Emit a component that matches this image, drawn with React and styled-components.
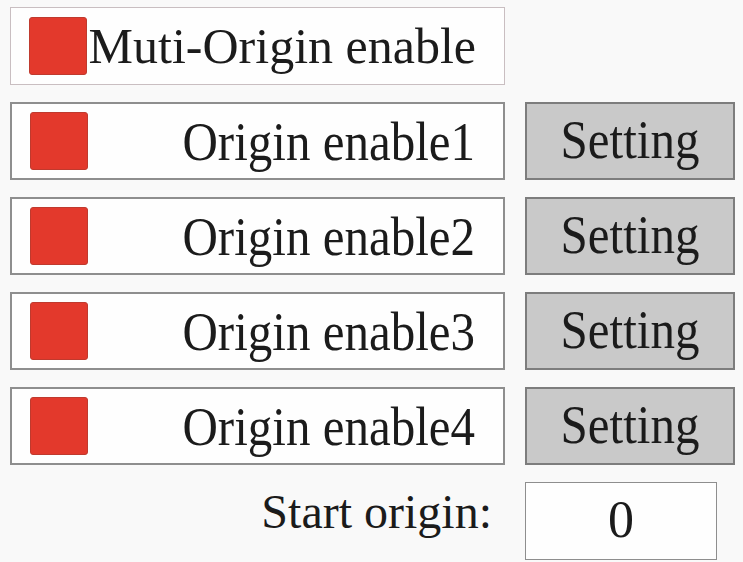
import React from 'react';
import styled, { createGlobalStyle } from 'styled-components';

const GlobalStyle = createGlobalStyle`
  html, body {
    margin: 0;
    padding: 0;
    background: #f9f9f9;
  }
  body {
    font-family: "Liberation Serif", "Times New Roman", serif;
    color: #1b1b1b;
  }
`;

const StyledPanel = styled.div`
  display: grid;
  grid-template-columns: 495px 210px;
  grid-auto-rows: 78px;
  column-gap: 20px;
  row-gap: 17px;
  padding: 7px 0 0 10px;
`;

const StyledOption = styled.div`
  display: flex;
  align-items: center;
  box-sizing: border-box;
  height: 100%;
  padding: 0 28px 0 18px;
  background: #fefefe;
  border: ${props => props.light ? '1.5px solid #c9bec1' : '2px solid #8e8e8e'};
  font-size: ${props => props.light ? '50px' : '49px'};
  line-height: 1;
`;

const StyledCheck = styled.span`
  flex: 0 0 auto;
  width: 58px;
  height: 58px;
  box-sizing: border-box;
  background: #e3392c;
  border: 1px solid #bf3a2e;
  border-radius: 3px;
`;

const StyledLabel = styled.span`
  flex: 1;
  text-align: right;
  white-space: nowrap;
  transform: ${props => props.tall ? 'scaleY(1.1)' : 'none'};
  transform-origin: center;
`;

const StyledButton = styled.button`
  box-sizing: border-box;
  height: 100%;
  width: 100%;
  margin: 0;
  padding: 0 0 4px 0;
  background: #c9c9c9;
  border: 2px solid #7d7d7d;
  font-family: "Liberation Serif", "Times New Roman", serif;
  font-size: 49px;
  line-height: 1;
  color: #1b1b1b;
  cursor: pointer;
`;

const StyledButtonText = styled.span`
  display: inline-block;
  transform: scaleY(1.1);
`;

const StyledStartLabel = styled.div`
  display: flex;
  align-items: center;
  justify-content: flex-end;
  padding: 0 13px 18px 0;
  font-size: 48px;
  line-height: 1;
  white-space: nowrap;
`;

const StyledInput = styled.input`
  box-sizing: border-box;
  width: 192px;
  height: 100%;
  margin: 0;
  padding: 0 0 4px 0;
  background: #fefefe;
  border: 1.5px solid #8e8e8e;
  text-align: center;
  font-family: "Liberation Serif", "Times New Roman", serif;
  font-size: 52px;
  color: #1b1b1b;
  outline: none;
`;

const ORIGINS = [1, 2, 3, 4];

const App = () => {
  const [start, setStart] = React.useState('0');

  return (
    <>
    <GlobalStyle />
    <StyledPanel>
      <StyledOption light>
        <StyledCheck />
        <StyledLabel>Muti-Origin enable</StyledLabel>
      </StyledOption>
      <div />
      {ORIGINS.map(n => (
        <React.Fragment key={n}>
          <StyledOption>
            <StyledCheck />
            <StyledLabel tall>Origin enable{n}</StyledLabel>
          </StyledOption>
          <StyledButton type="button">
            <StyledButtonText>Setting</StyledButtonText>
          </StyledButton>
        </React.Fragment>
      ))}
      <StyledStartLabel>Start origin:</StyledStartLabel>
      <StyledInput value={start} onChange={e => setStart(e.target.value)} />
    </StyledPanel>
    </>
  );
}

export default App;
